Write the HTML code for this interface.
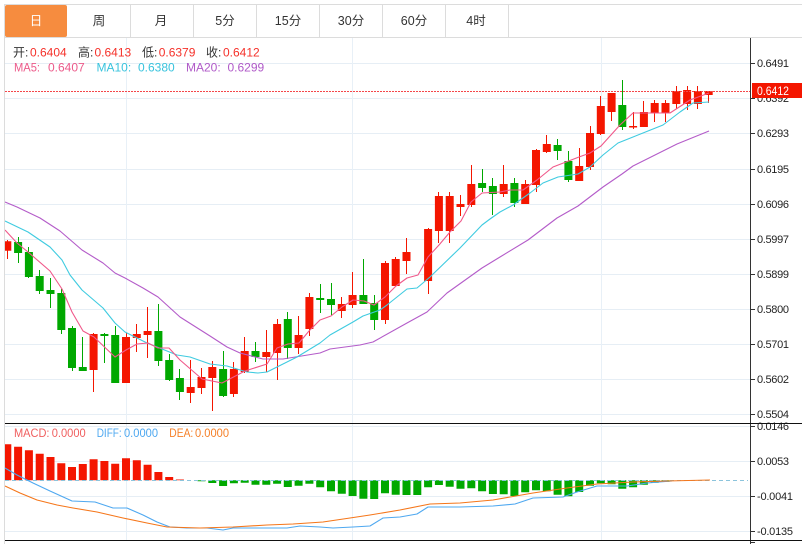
<!DOCTYPE html>
<html><head><meta charset="utf-8"><style>
html,body{margin:0;padding:0;background:#fff;width:802px;height:544px;overflow:hidden}
svg{display:block}
text{font-family:"Liberation Sans","Noto Sans CJK SC",sans-serif;font-size:12px}
.t{fill:#333;text-anchor:middle;font-size:12.5px}
.a{fill:#222;font-size:11px}
</style></head><body>
<svg width="802" height="544" viewBox="0 0 802 544" xmlns="http://www.w3.org/2000/svg">
<rect width="802" height="544" fill="#fff"/>
<g stroke="#e6eef5" fill="none">
<path d="M5 63.5H750M5 98.5H750M5 133.5H750M5 169.5H750M5 204.5H750M5 239.5H750M5 274.5H750M5 309.5H750M5 344.5H750M5 379.5H750M5 414.5H750M5 426.5H750M5 461.5H750M5 496.5H750M5 531.5H750"/>
<path d="M126.5 38V541M352.5 38V541M601.5 38V541" stroke="#e8f0f7"/>
</g>
<path d="M5 4.5H802M5 37.5H802M130.5 5V37M193.5 5V37M256.5 5V37M319.5 5V37M382.5 5V37M445.5 5V37M508.5 5V37" stroke="#dcdcdc" fill="none"/>
<rect x="5" y="5" width="62" height="32" rx="2" fill="#f68c3f"/>
<text class="t" x="36" y="25" style="fill:#fff">日</text>
<text class="t" x="99" y="25">周</text>
<text class="t" x="161" y="25">月</text>
<text class="t" x="225" y="25">5分</text>
<text class="t" x="288" y="25">15分</text>
<text class="t" x="351" y="25">30分</text>
<text class="t" x="414" y="25">60分</text>
<text class="t" x="476" y="25">4时</text>

<!-- wicks -->
<path fill="none" stroke="#f41600" d="M7.5 240V259M93.5 333V392M126.5 333V383M136.5 324V352M147.5 307V358M190.5 360V403M201.5 368V394M212.5 361V411M233.5 362V397M244.5 337V373M266.5 330V372M277.5 319V380M298.5 316V354M309.5 293V336M341.5 297V318M352.5 272V308M385.5 261V324M395.5 257V286M406.5 238V274M428.5 228V294M438.5 192V243M449.5 192V243M460.5 195V216M471.5 165V207M503.5 165V197M525.5 180V204M536.5 149V192M546.5 135V153M579.5 148V181M590.5 126V170M600.5 96V135M611.5 93V121M633.5 112V129M643.5 101V127M654.5 100V122M665.5 100V122M676.5 86V109M687.5 86V110M697.5 86V109M708.5 91V103"/>
<path fill="none" stroke="#00a800" d="M18.5 237V263M28.5 247V278M39.5 270V294M50.5 278V308M61.5 289V334M72.5 326V371M82.5 337V371M104.5 333V363M115.5 326V383M158.5 304V366M169.5 354V381M179.5 369V400M223.5 351V397M255.5 342V362M287.5 312V359M320.5 284V313M331.5 283V315M363.5 259V304M374.5 295V330M482.5 169V192M492.5 178V215M514.5 178V207M557.5 139V160M568.5 151V182M622.5 80V130"/>
<!-- bodies -->
<path fill="none" stroke="#f41600" stroke-width="8" d="M7.3 241.3V250.7M93.6 334V370M126 337V383M136.8 334V338M147.6 331V335M190.7 387V393M201.5 377V388M212.3 367V378M233.9 369V394M244.7 351V372M266.3 352V357M277.1 324V353M298.6 335V348M309.4 297V329M341.8 304V311M352.6 295V305M385 263V320M395.7 259V286M406.5 252V261M428.1 229V281M438.9 196V231M449.7 196V231M460.5 204V207M471.3 184V205M503.7 184V194M525.2 184V204M536 150V185M546.8 144V152M579.2 166V181M590 133V167M600.8 106V134M611.6 93V112M633.1 126V127.5M643.9 112V127M654.7 103V113M665.5 103V113M676.3 91V104M687.1 90V104M697.9 91V104M708.7 91V95"/>
<path fill="none" stroke="#00a800" stroke-width="8" d="M18.1 242V253M28.9 252V277M39.7 276V291M50.5 290V294M61.3 293V330M72 328V368M82.8 367V371M104.4 334V336M115.2 335V383M158.4 331V361M169.2 360V380M179.9 378V392M223.1 369V396M255.5 351V357M287.8 319V348M320.2 298V300M331 299V305M363.4 295V304M374.2 303V320M482.1 183V188M492.9 186V194M514.4 183V203M557.6 145V151M568.4 161V180M622.3 105V127"/>
<!-- MA lines -->
<g fill="none" stroke-width="1.1" stroke-linejoin="round">
<polyline stroke="#b45cc9" points="5,202 17,207 40,218 60,231 82,250 103,263 115,273 125,278 143,288 158,297 180,317 210,336 227,347 240,353 263,359 283,359 320,353 330,349 360,345 373,342 407,323 427,312 447,293 482,268 500,257 528,240 557,218 578,206 603,187 622,174 633,166 647,159 677,144 709,131"/>
<polyline stroke="#3fcbe0" points="5,221 28,232 50,247 62,260 70,275 82,290 103,308 115,323 125,332 147,343 177,355 190,357 210,364 227,366 247,372 258,373 267,372 287,362 297,357 320,343 330,335 353,322 363,316 380,310 387,305 407,289 417,288 430,277 460,248 482,225 490,219 500,212 513,205 530,193 543,183 558,177 578,174 590,167 603,155 618,143 633,137 663,125 680,112 693,103 709,102"/>
<polyline stroke="#f0588a" points="5,230 17,243 28,252 50,271 62,289 72,312 83,331 94,337 115,357 126,350 137,344 148,343 158,348 169,348 180,360 202,379 222,383 245,371 267,364 277,348 288,344 299,343 309,331 320,320 331,316 342,307 353,300 364,301 374,305 385,297 396,286 407,278 418,275 428,257 439,245 450,232 461,221 471,202 482,193 500,192 510,190 523,190 537,180 553,167 579,157 590,153 601,146 620,125 633,113 655,113 670,113 690,100 709,93"/>
</g>
<!-- MACD bars -->
<path fill="none" stroke="#f41600" stroke-width="8" d="M7.3 480.3V444.3M18.1 480.3V446.7M28.9 480.3V450.3M39.7 480.3V453.7M50.5 480.3V457M61.3 480.3V463.3M72 480.3V467M82.8 480.3V464M93.6 480.3V459.3M104.4 480.3V461M115.2 480.3V463.7M126 480.3V458.3M136.8 480.3V460.3M147.6 480.3V464.7M158.4 480.3V472M169.2 480.3V477M179.9 480.3V479.5"/>
<path fill="none" stroke="#00a800" stroke-width="8" d="M201.5 480.3V481.2M212.3 480.3V483M223.1 480.3V486M233.9 480.3V483.3M244.7 480.3V482.7M255.5 480.3V484.7M266.3 480.3V484.7M277.1 480.3V483.7M287.8 480.3V487M298.6 480.3V485.7M309.4 480.3V483.7M320.2 480.3V487.3M331 480.3V491.3M341.8 480.3V493.7M352.6 480.3V496M363.4 480.3V498.7M374.2 480.3V499M385 480.3V493.3M395.7 480.3V494.7M406.5 480.3V495M417.3 480.3V495M428.1 480.3V487.3M438.9 480.3V485M449.7 480.3V486.7M460.5 480.3V488.7M471.3 480.3V488.3M482.1 480.3V491.3M492.9 480.3V494M503.7 480.3V494.3M514.4 480.3V496M525.2 480.3V492.3M536 480.3V490.3M546.8 480.3V491.3M557.6 480.3V494.7M568.4 480.3V496.3M579.2 480.3V492M590 480.3V485.7M600.8 480.3V483.3M611.6 480.3V484.3M622.3 480.3V488.7M633.1 480.3V487.3M643.9 480.3V484.7M654.7 480.3V482.7M665.5 480.3V481.7"/>
<path d="M5 480.5H748" stroke="#8cc4dc" stroke-dasharray="4 3" fill="none"/>
<g fill="none" stroke-width="1.1" stroke-linejoin="round">
<polyline stroke="#4ea8f0" points="5,468 17,475 33,483 50,491 72,501 95,502 113,508 127,508 143,515 157,522 170,527 187,528 207,528 223,530 233,528 250,528 267,528 287,528 300,526 320,527 333,528 353,527 370,526 383,518 400,517 417,514 428,507 460,507 493,506 515,504 533,498 563,497 577,492 597,486 627,486 647,483 672,481"/>
<polyline stroke="#f5761a" points="5,486 20,493 37,500 57,505 73,508 97,512 123,518 147,523 167,527 200,528 233,527 267,525 293,524 323,522 350,518 370,515 400,510 430,504 460,503 493,500 533,493 567,488 597,484 633,482 667,481 710,480"/>
</g>
<!-- price dotted line -->
<path d="M5 91.5H750" stroke="#f4474a" stroke-dasharray="2 1" fill="none"/>
<!-- left cover / borders -->
<rect x="0" y="0" width="4" height="544" fill="#fff"/>
<path d="M4.5 4V544" stroke="#dcdcdc" fill="none"/>
<!-- axis labels -->
<g class="labels">
<text class="a" x="757" y="67" textLength="32">0.6491</text>
<text class="a" x="757" y="102" textLength="32">0.6392</text>
<text class="a" x="757" y="137" textLength="32">0.6293</text>
<text class="a" x="757" y="173" textLength="32">0.6195</text>
<text class="a" x="757" y="208" textLength="32">0.6096</text>
<text class="a" x="757" y="243" textLength="32">0.5997</text>
<text class="a" x="757" y="278" textLength="32">0.5899</text>
<text class="a" x="757" y="313" textLength="32">0.5800</text>
<text class="a" x="757" y="348" textLength="32">0.5701</text>
<text class="a" x="757" y="383" textLength="32">0.5602</text>
<text class="a" x="757" y="418" textLength="32">0.5504</text>
<text class="a" x="757" y="430" textLength="32">0.0146</text>
<text class="a" x="757" y="465" textLength="32">0.0053</text>
<text class="a" x="757" y="500" textLength="36">-0.0041</text>
<text class="a" x="757" y="535" textLength="36">-0.0135</text>
<text class="a" x="755" y="552" textLength="46">-126.1518</text>
</g>
<rect x="752" y="83" width="50" height="15" fill="#f41600"/>
<text x="757" y="95" fill="#fff" style="font-size:11.5px" textLength="32" lengthAdjust="spacingAndGlyphs">0.6412</text>
<path d="M755 63.5H750M755 98.5H750M755 133.5H750M755 169.5H750M755 204.5H750M755 239.5H750M755 274.5H750M755 309.5H750M755 344.5H750M755 379.5H750M755 414.5H750M755 426.5H750M755 461.5H750M755 496.5H750M755 531.5H750M755 542.5H750" stroke="#333" fill="none"/>
<path d="M750.5 38V544" stroke="#333" fill="none"/>
<path d="M5 423.5H802M5 540.5H802" stroke="#111" fill="none"/>
<rect x="751" y="541" width="51" height="1" fill="#fff"/>
<!-- info text -->
<g fill="#f5312a">
<text x="13" y="56.5" fill="#333">开:</text><text x="30" y="56.5">0.6404</text>
<text x="78" y="56.5" fill="#333">高:</text><text x="94.5" y="56.5">0.6413</text>
<text x="142" y="56.5" fill="#333">低:</text><text x="158.7" y="56.5">0.6379</text>
<text x="206" y="56.5" fill="#333">收:</text><text x="223" y="56.5">0.6412</text>
</g>
<g fill="#ec5a8a"><text x="14" y="71.5" textLength="26" lengthAdjust="spacingAndGlyphs">MA5:</text><text x="48" y="71.5">0.6407</text></g>
<g fill="#38c3dd"><text x="96.5" y="71.5">MA10:</text><text x="138" y="71.5">0.6380</text></g>
<g fill="#b05ac8"><text x="186" y="71.5">MA20:</text><text x="227.5" y="71.5">0.6299</text></g>
<g fill="#f06060"><text x="14" y="437" textLength="35.5" lengthAdjust="spacingAndGlyphs">MACD:</text><text x="51.7" y="437" textLength="34" lengthAdjust="spacingAndGlyphs">0.0000</text></g>
<g fill="#4ea8f0"><text x="96.7" y="437" textLength="25" lengthAdjust="spacingAndGlyphs">DIFF:</text><text x="124" y="437" textLength="34" lengthAdjust="spacingAndGlyphs">0.0000</text></g>
<g fill="#f5812a"><text x="169.3" y="437" textLength="24" lengthAdjust="spacingAndGlyphs">DEA:</text><text x="195" y="437" textLength="34" lengthAdjust="spacingAndGlyphs">0.0000</text></g>
</svg>
</body></html>
